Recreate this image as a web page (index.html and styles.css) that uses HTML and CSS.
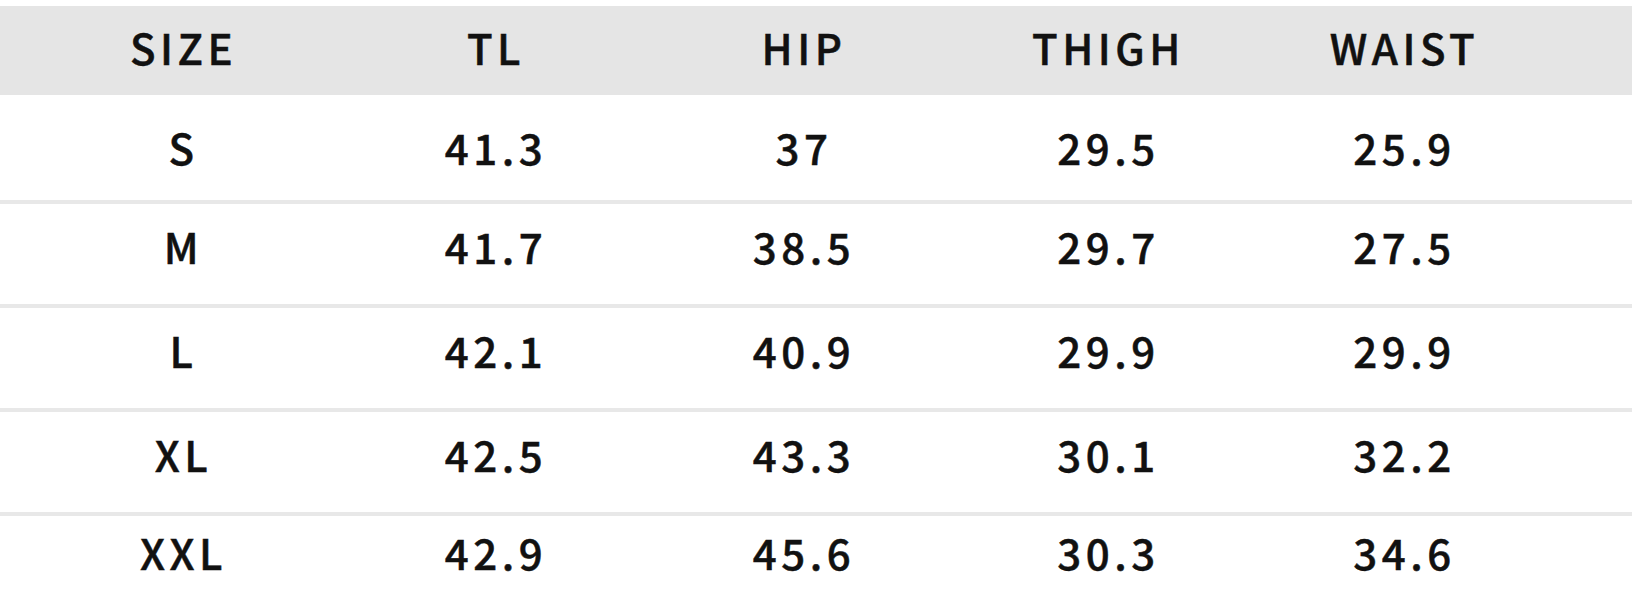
FILE: index.html
```html
<!DOCTYPE html>
<html lang="en">
<head>
<meta charset="utf-8">
<title>Size Chart</title>
<link rel="stylesheet" href="styles.css">
</head>
<body>
<div class="chart">
  <div class="row head">
    <div class="cell">SIZE</div>
    <div class="cell">TL</div>
    <div class="cell">HIP</div>
    <div class="cell">THIGH</div>
    <div class="cell">WAIST</div>
  </div>
  <div class="row body first">
    <div class="cell">S</div>
    <div class="cell">41.3</div>
    <div class="cell">37</div>
    <div class="cell">29.5</div>
    <div class="cell">25.9</div>
  </div>
  <div class="row body">
    <div class="cell">M</div>
    <div class="cell">41.7</div>
    <div class="cell">38.5</div>
    <div class="cell">29.7</div>
    <div class="cell">27.5</div>
  </div>
  <div class="row body">
    <div class="cell">L</div>
    <div class="cell">42.1</div>
    <div class="cell">40.9</div>
    <div class="cell">29.9</div>
    <div class="cell">29.9</div>
  </div>
  <div class="row body">
    <div class="cell">XL</div>
    <div class="cell">42.5</div>
    <div class="cell">43.3</div>
    <div class="cell">30.1</div>
    <div class="cell">32.2</div>
  </div>
  <div class="row body">
    <div class="cell">XXL</div>
    <div class="cell">42.9</div>
    <div class="cell">45.6</div>
    <div class="cell">30.3</div>
    <div class="cell">34.6</div>
  </div>
</div>
</body>
</html>
```

FILE: styles.css
```css
html, body {
  margin: 0;
  padding: 0;
  background: #ffffff;
}

body {
  width: 1632px;
  height: 594px;
  overflow: hidden;
  font-family: "Noto Sans CJK SC", "Noto Sans", sans-serif;
  font-weight: 500;
  color: #111111;
}

.chart {
  padding-top: 6px;
}

.row {
  display: grid;
  grid-template-columns: 307px 318px 298px 311px 281px;
  padding-left: 30px;
  align-items: center;
  box-sizing: border-box;
}

.cell {
  text-align: center;
  font-size: 42px;
  line-height: 1;
  letter-spacing: 4.5px;
  -webkit-text-stroke: 0.5px #111111;
}

.head {
  background: #e5e5e5;
  height: 89px;
  padding-bottom: 8px;
}

.body {
  height: 104px;
  border-bottom: 4px solid #e8e8e8;
  padding-bottom: 17px;
}

.body.first {
  height: 109px;
  padding-bottom: 2px;
}

.body:last-child {
  padding-bottom: 28px;
}
```
